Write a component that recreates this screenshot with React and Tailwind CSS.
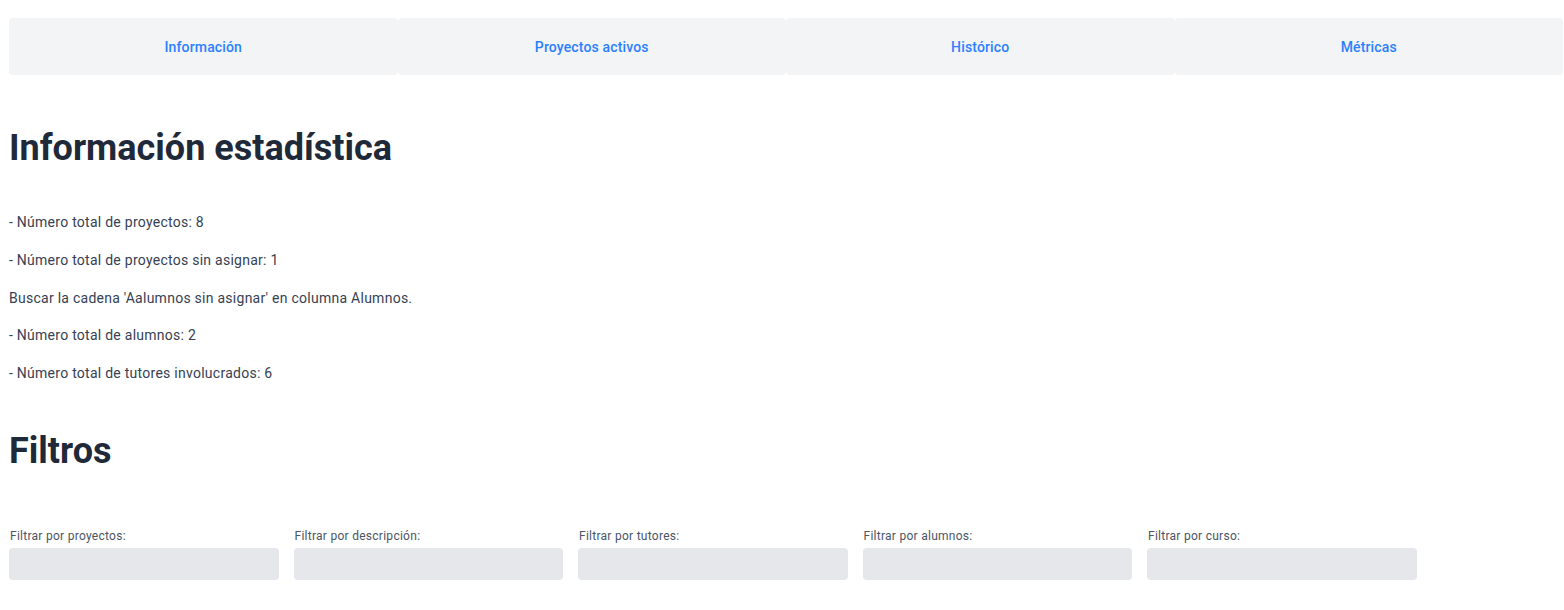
import React from "react";

const tabs = ["Información", "Proyectos activos", "Histórico", "Métricas"];

const stats = [
  "- Número total de proyectos: 8",
  "- Número total de proyectos sin asignar: 1",
  "Buscar la cadena 'Aalumnos sin asignar' en columna Alumnos.",
  "- Número total de alumnos: 2",
  "- Número total de tutores involucrados: 6",
];

const filters = [
  "Filtrar por proyectos:",
  "Filtrar por descripción:",
  "Filtrar por tutores:",
  "Filtrar por alumnos:",
  "Filtrar por curso:",
];

const App = () => {
  return (
    <div
      className="min-h-screen bg-white pl-[9px] pr-px pt-[18px]"
      style={{ fontFamily: "Roboto, 'Noto Sans', sans-serif" }}
    >
      {/* Tabs */}
      <div className="flex">
        {tabs.map((tab) => (
          <button
            key={tab}
            className="flex-1 h-[57px] bg-gray-100 rounded text-sm font-medium tracking-[0.15px] text-blue-500"
          >
            {tab}
          </button>
        ))}
      </div>

      {/* Stats */}
      <h1 className="mt-[53px] text-4xl font-bold text-gray-800 leading-10">
        Información estadística
      </h1>
      <div className="mt-[44px] flex flex-col gap-[16.75px]">
        {stats.map((line) => (
          <p
            key={line}
            className="text-sm leading-[21px] tracking-[0.26px] text-gray-700"
          >
            {line}
          </p>
        ))}
      </div>

      {/* Filters */}
      <h2 className="mt-[47px] text-4xl font-bold text-gray-800 leading-10">
        Filtros
      </h2>
      <div className="mt-[57px] flex gap-[15px]">
        {filters.map((label) => (
          <div key={label} className="w-[269.5px] flex flex-col">
            <label className="pl-px text-xs leading-4 tracking-[0.27px] text-gray-600">
              {label}
            </label>
            <input
              type="text"
              className="mt-[4px] h-8 w-full rounded bg-gray-200 outline-none px-2 text-sm"
            />
          </div>
        ))}
      </div>
    </div>
  );
};

export default App;
